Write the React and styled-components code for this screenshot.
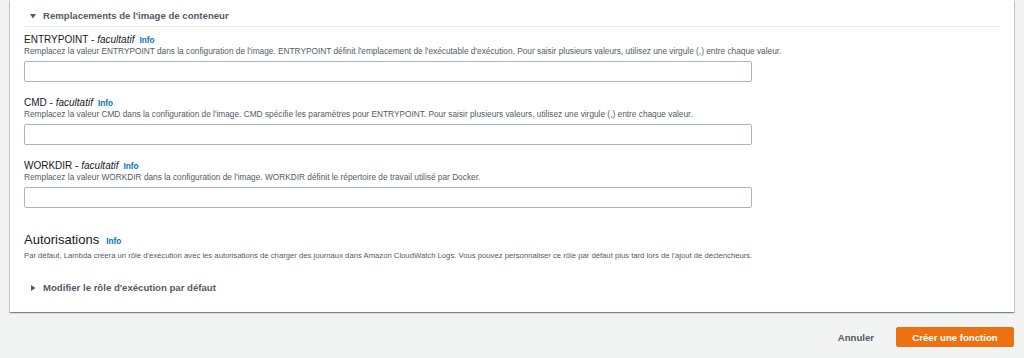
import React from "react";
import styled, { createGlobalStyle } from "styled-components";

const Global = createGlobalStyle`
  html, body { margin: 0; padding: 0; background: #f2f3f3; }
  body { font-family: "Liberation Sans", Arial, sans-serif; color: #16191f; }
  * { box-sizing: border-box; }
`;

const Page = styled.div`
  width: 1024px;
  height: 358px;
  overflow: hidden;
  background: #f2f3f3;
  display: flex;
  flex-direction: column;
`;

const Panel = styled.section`
  margin: 0 10px;
  background: #fff;
  box-shadow: 0 1px 1px 0 rgba(0, 28, 36, 0.3), 1px 1px 1px 0 rgba(0, 28, 36, 0.15),
    -1px 1px 1px 0 rgba(0, 28, 36, 0.15);
  padding: 0 14px 18px 14px;
  display: flex;
  flex-direction: column;
`;

const ExpandHeader = styled.div`
  height: ${(p) => (p.$bordered ? "27px" : "12px")};
  padding-top: ${(p) => (p.$bordered ? "6px" : "0")};
  display: flex;
  align-items: center;
  gap: 7px;
  padding-left: 6px;
  border-bottom: ${(p) => (p.$bordered ? "1px solid #eaeded" : "none")};
  margin-top: ${(p) => p.$mt || 0}px;
  font-size: 9.6px;
  font-weight: 700;
  color: #545b64;
  line-height: 12px;
`;

const Caret = styled.svg`
  width: 6px;
  height: 6px;
  flex: none;
  fill: #545b64;
`;

const Field = styled.div`
  display: flex;
  flex-direction: column;
  margin-top: ${(p) => p.$mt}px;
`;

const LabelRow = styled.div`
  display: flex;
  align-items: baseline;
  height: 12px;
  line-height: 12px;
  font-size: 10px;
  color: #16191f;
  em { font-style: italic; }
`;

const InfoLink = styled.a`
  margin-left: ${(p) => p.$ml || 5}px;
  font-size: 8.2px;
  font-weight: 700;
  color: #0073bb;
  text-decoration: none;
`;

const Desc = styled.div`
  height: 10px;
  line-height: 10px;
  font-size: ${(p) => p.$size || 8.3}px;
  color: #545b64;
  white-space: nowrap;
  margin-top: ${(p) => p.$mt || 0}px;
`;

const TextInput = styled.input`
  margin-top: 5px;
  width: 728px;
  height: 21px;
  border: 1px solid #aab7b8;
  border-radius: 2px;
  background: #fff;
  padding: 0 6px;
  font-family: inherit;
  font-size: 9px;
  outline: none;
`;

const SectionTitle = styled.div`
  margin-top: 24px;
  height: 16px;
  display: flex;
  align-items: baseline;
  line-height: 16px;
  font-size: 13px;
  color: #16191f;
`;

const Footer = styled.div`
  margin-top: 15px;
  padding-right: 10px;
  display: flex;
  justify-content: flex-end;
  align-items: center;
  gap: 22px;
`;

const LinkButton = styled.button`
  border: none;
  background: transparent;
  padding: 0;
  font-family: inherit;
  font-size: 9.6px;
  font-weight: 700;
  color: #545b64;
  height: 20px;
`;

const PrimaryButton = styled.button`
  border: 1px solid #ec7211;
  background: #ec7211;
  color: #fff;
  border-radius: 2px;
  width: 118px;
  height: 20px;
  padding: 0;
  font-family: inherit;
  font-size: 9.6px;
  font-weight: 700;
`;

const fields = [
  {
    name: "ENTRYPOINT",
    desc:
      "Remplacez la valeur ENTRYPOINT dans la configuration de l'image. ENTRYPOINT définit l'emplacement de l'exécutable d'exécution. Pour saisir plusieurs valeurs, utilisez une virgule (,) entre chaque valeur.",
  },
  {
    name: "CMD",
    desc:
      "Remplacez la valeur CMD dans la configuration de l'image. CMD spécifie les paramètres pour ENTRYPOINT. Pour saisir plusieurs valeurs, utilisez une virgule (,) entre chaque valeur.",
  },
  {
    name: "WORKDIR",
    desc:
      "Remplacez la valeur WORKDIR dans la configuration de l'image. WORKDIR définit le répertoire de travail utilisé par Docker.",
  },
];

const Down = () => (
  <Caret viewBox="0 0 6 6">
    <polygon points="0,1 6,1 3,5.5" />
  </Caret>
);
const Right = () => (
  <Caret viewBox="0 0 6 6">
    <polygon points="1,0 5.5,3 1,6" />
  </Caret>
);

export default function App() {
  return (
    <Page>
      <Global />
      <Panel>
        <ExpandHeader $bordered>
          <Down />
          Remplacements de l'image de conteneur
        </ExpandHeader>
        {fields.map((f, i) => (
          <Field key={f.name} $mt={i === 0 ? 7 : 15}>
            <LabelRow>
              {f.name}&nbsp;-&nbsp;<em>facultatif</em>
              <InfoLink href="#">Info</InfoLink>
            </LabelRow>
            <Desc>{f.desc}</Desc>
            <TextInput type="text" />
          </Field>
        ))}
        <SectionTitle>
          Autorisations
          <InfoLink href="#" $ml={7}>Info</InfoLink>
        </SectionTitle>
        <Desc $mt={3} $size={7.7}>
          Par défaut, Lambda créera un rôle d'exécution avec les autorisations de charger des journaux dans Amazon CloudWatch Logs. Vous pouvez personnaliser ce rôle par défaut plus tard lors de l'ajout de déclencheurs.
        </Desc>
        <ExpandHeader $mt={21}>
          <Right />
          Modifier le rôle d'exécution par défaut
        </ExpandHeader>
      </Panel>
      <Footer>
        <LinkButton>Annuler</LinkButton>
        <PrimaryButton>Créer une fonction</PrimaryButton>
      </Footer>
    </Page>
  );
}
